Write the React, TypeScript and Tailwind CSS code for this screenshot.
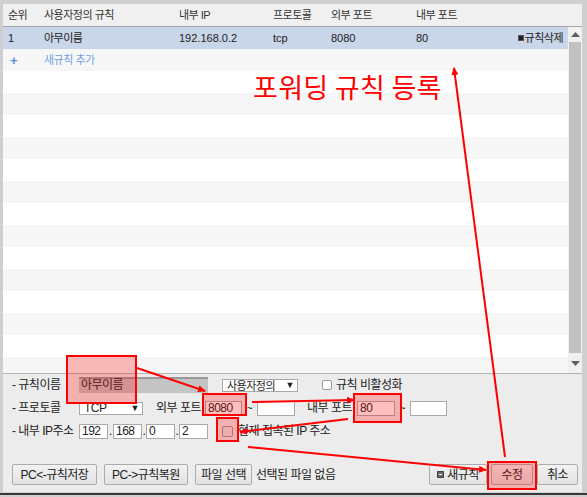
import React from 'react';

const FONT = { fontFamily: '"Liberation Sans", "Noto Sans CJK KR", sans-serif' };

const ROWS = 16;

function UpArrow() {
  return (
    <svg width="9" height="5" viewBox="0 0 9 5">
      <path d="M0 5 L4.5 0 L9 5 Z" fill="#606060" />
    </svg>
  );
}

function DownArrow() {
  return (
    <svg width="9" height="5" viewBox="0 0 9 5">
      <path d="M0 0 L9 0 L4.5 5 Z" fill="#606060" />
    </svg>
  );
}

function TextBox({ w, value, className = '' }: { w: string; value?: string; className?: string }) {
  return (
    <div
      className={`${w} h-[15px] bg-white border border-[#a9a9a9] text-[12px] leading-[13px] pl-[2px] text-[#222] overflow-hidden ${className}`}
    >
      {value}
    </div>
  );
}

function Btn({ children, className = '' }: { children: React.ReactNode; className?: string }) {
  return (
    <div
      className={`h-[21px] flex items-center justify-center border border-[#acacac] rounded-[2px] bg-gradient-to-b from-[#f2f2f2] to-[#e2e2e2] text-[12px] text-[#222] ${className}`}
    >
      {children}
    </div>
  );
}

function Annotations() {
  return (
    <svg className="absolute inset-0 pointer-events-none" width="587" height="497" viewBox="0 0 587 497">
      <defs>
        <marker id="ah" markerWidth="8" markerHeight="7" refX="7" refY="3.5" orient="auto" markerUnits="userSpaceOnUse">
          <path d="M0 0 L8 3.5 L0 7 Z" fill="#ff0000" />
        </marker>
      </defs>
      <rect x="67" y="356" width="69" height="47" fill="rgba(255,0,0,0.25)" stroke="#ff0000" strokeWidth="2" />
      <rect x="203" y="394" width="43" height="21" fill="rgba(255,0,0,0.25)" stroke="#ff0000" strokeWidth="2" />
      <rect x="354" y="394" width="47" height="28" fill="rgba(255,0,0,0.25)" stroke="#ff0000" strokeWidth="2" />
      <rect x="217" y="418" width="21" height="23" fill="rgba(255,0,0,0.25)" stroke="#ff0000" strokeWidth="2" />
      <rect x="488" y="462" width="48" height="27" fill="rgba(255,0,0,0.25)" stroke="#ff0000" strokeWidth="2" />
      <g stroke="#ff0000" strokeWidth="2" fill="none">
        <line x1="137" y1="368" x2="205" y2="391" markerEnd="url(#ah)" />
        <line x1="252" y1="402" x2="354" y2="400" markerEnd="url(#ah)" />
        <line x1="348" y1="419" x2="240" y2="432" markerEnd="url(#ah)" />
        <line x1="248" y1="447" x2="486" y2="470" markerEnd="url(#ah)" />
        <line x1="505" y1="457" x2="454" y2="68" markerEnd="url(#ah)" />
      </g>
    </svg>
  );
}

export default function App() {
  return (
    <div className="relative w-[587px] h-[497px] bg-[#cfcfcf] overflow-hidden" style={FONT}>
      <div className="absolute left-[3px] top-[4px] w-[579px] h-[488px] flex flex-col bg-white">
        {/* Header */}
        <div className="h-[23px] shrink-0 flex items-center bg-[#f0f0f0] border-b border-[#a5a5a5] pl-[5px] text-[11px] text-[#333] tracking-[-0.5px]">
          <span className="w-[36px]">순위</span>
          <span className="w-[135px]">사용자정의 규칙</span>
          <span className="w-[94px]">내부 IP</span>
          <span className="w-[58px]">프로토콜</span>
          <span className="w-[85px]">외부 포트</span>
          <span>내부 포트</span>
        </div>

        {/* List */}
        <div className="h-[346px] shrink-0 flex overflow-hidden">
          <div className="flex-1 flex flex-col overflow-hidden text-[11px] text-[#222]">
            <div className="h-[22px] shrink-0 flex items-center bg-[#c9d5e8] pl-[5px]">
              <span className="w-[36px]">1</span>
              <span className="w-[135px] tracking-[-0.5px]">아무이름</span>
              <span className="w-[94px]">192.168.0.2</span>
              <span className="w-[58px]">tcp</span>
              <span className="w-[85px]">8080</span>
              <span className="flex-1">80</span>
              <span className="flex items-center pr-[5px] tracking-[-0.5px]">
                <span className="w-[6px] h-[6px] bg-[#222] border border-[#555] mr-[1px]" />
                규칙삭제
              </span>
            </div>
            <div className="h-[22px] shrink-0 flex items-center bg-[#f7f7f7] pl-[7px]">
              <span className="w-[34px] text-[#5b8fe0] text-[13px] font-bold leading-none">+</span>
              <span className="text-[#6f9fe8] tracking-[-0.5px]">새규칙 추가</span>
            </div>
            {Array.from({ length: ROWS - 2 }).map((_, i) => (
              <div key={i} className={`h-[22px] shrink-0 ${i % 2 === 0 ? 'bg-white' : 'bg-[#f6f6f6]'}`} />
            ))}
          </div>
          {/* Scrollbar */}
          <div className="w-[14px] shrink-0 flex flex-col bg-[#f0f0f0]">
            <div className="h-[15px] flex items-center justify-center"><UpArrow /></div>
            <div className="mx-[1px] h-[311px] bg-[#c1c1c1]" />
            <div className="flex-1 flex items-center justify-center"><DownArrow /></div>
          </div>
        </div>

        {/* Edit panel */}
        <div className="flex-1 flex flex-col bg-[#ececec] border-t border-[#b4b4b4] pl-[9px] text-[12px] text-[#222] tracking-[-0.5px]">
          <div className="mt-[3px] h-[16px] flex items-center">
            <span className="w-[67px]">- 규칙이름</span>
            <div className="w-[129px] h-[16px] bg-[#c4c4c4] border-t-2 border-[#9a9a9a] text-[12px] leading-[13px] pl-[2px]">아무이름</div>
            <div className="ml-[14px] w-[76px] h-[13px] bg-white border border-[#a9a9a9] flex items-center justify-between pl-[4px] pr-[3px] overflow-hidden text-[11px]">
              <span className="leading-none mt-[2px]">사용자정의</span>
              <span className="text-[9px] leading-none">▼</span>
            </div>
            <div className="ml-[24px] w-[10px] h-[10px] bg-white border border-[#999] rounded-[2px]" />
            <span className="ml-[4px]">규칙 비활성화</span>
          </div>

          <div className="mt-[7px] h-[16px] flex items-center">
            <span className="w-[67px]">- 프로토콜</span>
            <div className="w-[64px] h-[13px] bg-white border border-[#a9a9a9] flex items-center justify-between pl-[4px] pr-[3px] overflow-hidden">
              <span className="leading-[11px] text-[12px]">TCP</span>
              <span className="text-[9px] leading-[11px]">▼</span>
            </div>
            <span className="ml-[13px] w-[49px]">외부 포트</span>
            <TextBox w="w-[37px]" value="8080" />
            <span className="w-[15px] text-center text-[10px]">~</span>
            <TextBox w="w-[38px]" />
            <span className="ml-[12px] w-[50px]">내부 포트</span>
            <TextBox w="w-[38px]" value="80" />
            <span className="w-[15px] text-center text-[10px]">~</span>
            <TextBox w="w-[37px]" />
          </div>

          <div className="mt-[7px] h-[16px] flex items-center">
            <span className="w-[67px]">- 내부 IP주소</span>
            <TextBox w="w-[29px]" value="192" />
            <span className="w-[5px] text-center">.</span>
            <TextBox w="w-[29px]" value="168" />
            <span className="w-[4px] text-center">.</span>
            <TextBox w="w-[29px]" value="0" />
            <span className="w-[4px] text-center">.</span>
            <TextBox w="w-[29px]" value="2" />
            <div className="ml-[14px] w-[11px] h-[11px] bg-[#e8e8e8] border border-[#999] rounded-[2px]" />
            <span className="ml-[5px]">현재 접속된 IP 주소</span>
          </div>

          <div className="mt-[25px] flex items-center pr-[4px]">
            <Btn className="w-[85px]">PC&lt;-규칙저장</Btn>
            <Btn className="ml-[7px] w-[84px]">PC-&gt;규칙복원</Btn>
            <Btn className="ml-[7px] w-[57px]">파일 선택</Btn>
            <span className="ml-[4px] flex-1">선택된 파일 없음</span>
            <Btn className="w-[58px]">
              <span className="w-[7px] h-[7px] bg-[#666] border border-[#444] mr-[3px] flex items-center justify-center">
                <span className="w-[3px] h-[1px] bg-white" />
              </span>
              새규칙
            </Btn>
            <Btn className="ml-[4px] w-[42px]">수정</Btn>
            <Btn className="ml-[4px] w-[41px]">취소</Btn>
          </div>
        </div>
      </div>
      <div className="absolute left-0 bottom-[2px] w-full h-[2px] bg-[#3a3a3a]" />
      <span
        className="absolute left-[253px] top-[70px] text-[27px] leading-[34px] text-[#ff0000] tracking-[0.3px]"
        style={{ fontFamily: '"Noto Sans CJK KR", sans-serif' }}
      >
        포워딩 규칙 등록
      </span>
      <Annotations />
    </div>
  );
}
